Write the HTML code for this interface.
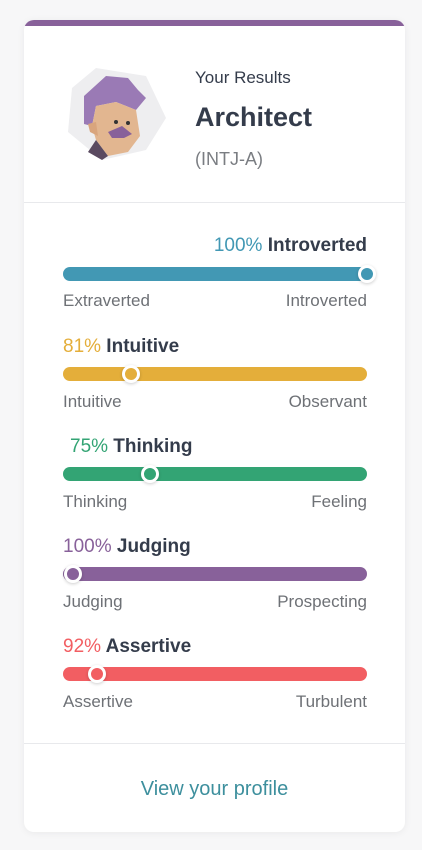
<!DOCTYPE html>
<html><head><style>
body{margin:0;background:#f7f7f8;width:422px;height:850px;font-family:"Liberation Sans",sans-serif;position:relative;overflow:hidden}
.card{position:absolute;left:24px;top:20px;width:381px;height:812px;background:#fff;border-radius:10px;overflow:hidden;box-shadow:0 1px 8px rgba(0,0,0,.06)}
.top{position:absolute;left:0;top:0;width:100%;height:6px;background:#88619a}
.t{position:absolute;white-space:nowrap}
.bar{position:absolute;left:39px;width:304px;height:14px;border-radius:7px}
.knob{position:absolute;width:12px;height:12px;border-radius:50%;border:3px solid #fff;box-shadow:0 1px 3px rgba(0,0,0,.2)}
.lab{position:absolute;font-size:17px;color:#6e7176}
.hd{position:absolute;font-size:19px;font-weight:bold;color:#343c4b}
.hd span{font-weight:normal}
.div{position:absolute;left:0;width:100%;height:1px;background:#e8e9ec}
</style></head><body>
<div class="card">
<div class="top"></div>
<svg style="position:absolute;left:42px;top:46px" width="102" height="96" viewBox="0 0 102 96">
<polygon points="30,2 80,10 100,52 80,84 36,94 2,66 6,22" fill="#eeeef0"/>
<polygon points="18,30 40,10 62,12 72,24 80,32 70,44 50,36 30,40 26,60 18,58" fill="#9a7ab5"/>
<polygon points="30,40 50,36 70,44 74,70 62,86 42,90 30,74 26,60" fill="#e2b690"/>
<polygon points="22,58 30,56 32,70 24,66" fill="#d9a57d"/>
<polygon points="42,66 56,60 66,68 58,72 46,72" fill="#88619a"/>
<polygon points="30,74 42,90 36,94 22,86" fill="#5a4a60"/>
<circle cx="50" cy="56" r="2" fill="#333"/><circle cx="62" cy="57" r="2" fill="#333"/>
</svg>
<div class="t" style="left:171px;top:48px;font-size:17px;color:#343c4b">Your Results</div>
<div class="t" style="left:171px;top:82px;font-size:27px;font-weight:bold;color:#343c4b">Architect</div>
<div class="t" style="left:171px;top:129px;font-size:18px;color:#7a7d82">(INTJ-A)</div>
<div class="div" style="top:182px"></div>

<div class="hd" style="right:38px;top:215px"><span style="color:#4298b4">100%</span> Introverted</div>
<div class="bar" style="top:247px;background:#4298b4"></div>
<div class="knob" style="left:334px;top:245px;background:#4298b4"></div>
<div class="lab" style="left:39px;top:271px">Extraverted</div>
<div class="lab" style="right:38px;top:271px">Introverted</div>

<div class="hd" style="left:39px;top:316px"><span style="color:#e4ae3a">81%</span> Intuitive</div>
<div class="bar" style="top:347px;background:#e4ae3a"></div>
<div class="knob" style="left:98px;top:345px;background:#e4ae3a"></div>
<div class="lab" style="left:39px;top:372px">Intuitive</div>
<div class="lab" style="right:38px;top:372px">Observant</div>

<div class="hd" style="left:46px;top:416px"><span style="color:#33a474">75%</span> Thinking</div>
<div class="bar" style="top:447px;background:#33a474"></div>
<div class="knob" style="left:117px;top:445px;background:#33a474"></div>
<div class="lab" style="left:39px;top:472px">Thinking</div>
<div class="lab" style="right:38px;top:472px">Feeling</div>

<div class="hd" style="left:39px;top:516px"><span style="color:#88619a">100%</span> Judging</div>
<div class="bar" style="top:547px;background:#88619a"></div>
<div class="knob" style="left:40px;top:545px;background:#88619a"></div>
<div class="lab" style="left:39px;top:572px">Judging</div>
<div class="lab" style="right:38px;top:572px">Prospecting</div>

<div class="hd" style="left:39px;top:616px"><span style="color:#f25e62">92%</span> Assertive</div>
<div class="bar" style="top:647px;background:#f25e62"></div>
<div class="knob" style="left:64px;top:645px;background:#f25e62"></div>
<div class="lab" style="left:39px;top:672px">Assertive</div>
<div class="lab" style="right:38px;top:672px">Turbulent</div>

<div class="div" style="top:723px"></div>
<div class="t" style="left:0;width:100%;text-align:center;top:758px;font-size:20px;color:#3d8f9d">View your profile</div>
</div>
</body></html>
